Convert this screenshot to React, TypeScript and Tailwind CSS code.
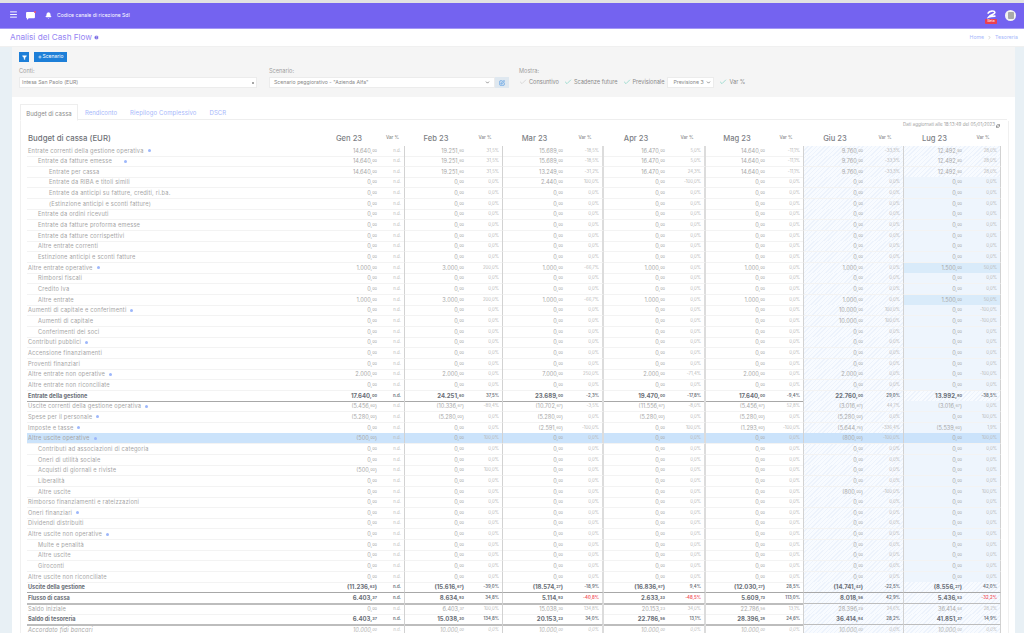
import React from "react";
import { Menu, Bell, Filter, Plus, ChevronDown, ChevronRight, Check, SquarePen, RefreshCw, HelpCircle } from "lucide-react";

const grid =
  "grid grid-cols-[291px_62px_25px_62px_36px_63px_38px_64px_38px_62px_36px_62px_38px_61px_36px]";

type Row = { l: string; i?: number; m?: number; k?: "t" | "tl" | "tt" | "it" };
const rows: Row[] = [
  { l: "Entrate correnti della gestione operativa", m: 5 },
  { l: "Entrate da fatture emesse", i: 1, m: 12 },
  { l: "Entrate per cassa", i: 2 },
  { l: "Entrate da RIBA e titoli simili", i: 2 },
  { l: "Entrate da anticipi su fatture, crediti, ri.ba.", i: 2 },
  { l: "(Estinzione anticipi e sconti fatture)", i: 2 },
  { l: "Entrate da ordini ricevuti", i: 1 },
  { l: "Entrate da fatture proforma emesse", i: 1 },
  { l: "Entrate da fatture corrispettivi", i: 1 },
  { l: "Altre entrate correnti", i: 1 },
  { l: "Estinzione anticipi e sconti fatture", i: 1 },
  { l: "Altre entrate operative", m: 5 },
  { l: "Rimborsi fiscali", i: 1 },
  { l: "Credito Iva", i: 1 },
  { l: "Altre entrate", i: 1 },
  { l: "Aumenti di capitale e conferimenti", m: 5 },
  { l: "Aumenti di capitale", i: 1 },
  { l: "Conferimenti dei soci", i: 1 },
  { l: "Contributi pubblici", m: 5 },
  { l: "Accensione finanziamenti" },
  { l: "Proventi finanziari" },
  { l: "Altre entrate non operative", m: 5 },
  { l: "Altre entrate non riconciliate" },
  { l: "Entrate della gestione", k: "tl" },
  { l: "Uscite correnti della gestione operativa", m: 5 },
  { l: "Spese per il personale", m: 5 },
  { l: "Imposte e tasse", m: 5 },
  { l: "Altre uscite operative", m: 5 },
  { l: "Contributi ad associazioni di categoria", i: 1 },
  { l: "Oneri di utilità sociale", i: 1 },
  { l: "Acquisti di giornali e riviste", i: 1 },
  { l: "Liberalità", i: 1 },
  { l: "Altre uscite", i: 1 },
  { l: "Rimborso finanziamenti e rateizzazioni" },
  { l: "Oneri finanziari", m: 5 },
  { l: "Dividendi distribuiti" },
  { l: "Altre uscite non operative", m: 5 },
  { l: "Multe e penalità", i: 1 },
  { l: "Altre uscite", i: 1 },
  { l: "Giroconti", i: 1 },
  { l: "Altre uscite non riconciliate" },
  { l: "Uscite della gestione", k: "tl" },
  { l: "Flusso di cassa", k: "tt" },
  { l: "Saldo iniziale" },
  { l: "Saldo di tesoreria", k: "tt" },
  { l: "Accordato fidi bancari", k: "it" },
];

type Col = { name: string; d: string; data: Record<number, [string, string]> };
const same = (ids: number[], v: [string, string]) => Object.fromEntries(ids.map((i) => [i, v]));

const cols: Col[] = [
  {
    name: "Gen",
    d: "n.d.",
    data: {
      ...same([0, 1, 2], ["14.640,00", "n.d."]),
      ...same([11, 14], ["1.000,00", "n.d."]),
      21: ["2.000,00", "n.d."],
      23: ["17.640,00", "n.d."],
      24: ["(5.456,60)", "n.d."],
      25: ["(5.280,00)", "n.d."],
      27: ["(500,00)", "n.d."],
      30: ["(500,00)", "n.d."],
      41: ["(11.236,63)", "n.d."],
      42: ["6.403,37", "n.d."],
      44: ["6.403,37", "n.d."],
      45: ["10.000,00", "n.d."],
    },
  },
  {
    name: "Feb",
    d: "0,0%",
    data: {
      ...same([0, 1, 2], ["19.251,60", "31,5%"]),
      ...same([11, 14], ["3.000,00", "200,0%"]),
      21: ["2.000,00", "0,0%"],
      23: ["24.251,60", "37,5%"],
      24: ["(10.336,67)", "-89,4%"],
      25: ["(5.280,00)", "0,0%"],
      27: ["0,00", "100,0%"],
      30: ["0,00", "100,0%"],
      41: ["(15.616,67)", "-39,0%"],
      42: ["8.634,93", "34,8%"],
      43: ["6.403,37", "100,0%"],
      44: ["15.038,30", "134,8%"],
      45: ["10.000,00", "0,0%"],
    },
  },
  {
    name: "Mar",
    d: "0,0%",
    data: {
      ...same([0, 1], ["15.689,00", "-18,5%"]),
      2: ["13.249,00", "-31,2%"],
      3: ["2.440,00", "100,0%"],
      ...same([11, 14], ["1.000,00", "-66,7%"]),
      21: ["7.000,00", "250,0%"],
      23: ["23.689,00", "-2,3%"],
      24: ["(10.702,67)", "-3,5%"],
      25: ["(5.280,00)", "0,0%"],
      26: ["(2.591,60)", "-100,0%"],
      41: ["(18.574,27)", "-18,9%"],
      42: ["5.114,93", "-40,8%"],
      43: ["15.038,30", "134,8%"],
      44: ["20.153,23", "34,0%"],
      45: ["10.000,00", "0,0%"],
    },
  },
  {
    name: "Apr",
    d: "0,0%",
    data: {
      ...same([0, 1], ["16.470,00", "5,0%"]),
      2: ["16.470,00", "24,3%"],
      3: ["0,00", "-100,0%"],
      ...same([11, 14], ["1.000,00", "0,0%"]),
      21: ["2.000,00", "-71,4%"],
      23: ["19.470,00", "-17,8%"],
      24: ["(11.556,67)", "-8,0%"],
      25: ["(5.280,00)", "0,0%"],
      26: ["0,00", "100,0%"],
      41: ["(16.836,67)", "9,4%"],
      42: ["2.633,33", "-48,5%"],
      43: ["20.153,23", "34,0%"],
      44: ["22.786,56", "13,1%"],
      45: ["10.000,00", "0,0%"],
    },
  },
  {
    name: "Mag",
    d: "0,0%",
    data: {
      ...same([0, 1, 2], ["14.640,00", "-11,1%"]),
      ...same([11, 14], ["1.000,00", "0,0%"]),
      21: ["2.000,00", "0,0%"],
      23: ["17.640,00", "-9,4%"],
      24: ["(5.456,67)", "52,8%"],
      25: ["(5.280,00)", "0,0%"],
      26: ["(1.293,60)", "-100,0%"],
      41: ["(12.030,27)", "28,5%"],
      42: ["5.609,73", "113,0%"],
      43: ["22.786,56", "13,1%"],
      44: ["28.396,28", "24,6%"],
      45: ["10.000,00", "0,0%"],
    },
  },
  {
    name: "Giu",
    d: "0,0%",
    data: {
      ...same([0, 1, 2], ["9.760,00", "-33,3%"]),
      ...same([11, 14], ["1.000,00", "0,0%"]),
      ...same([15, 16], ["10.000,00", "100,0%"]),
      21: ["2.000,00", "0,0%"],
      23: ["22.760,00", "29,0%"],
      24: ["(3.016,67)", "44,7%"],
      25: ["(5.280,00)", "0,0%"],
      26: ["(5.644,76)", "-336,4%"],
      27: ["(800,00)", "-100,0%"],
      32: ["(800,00)", "-100,0%"],
      41: ["(14.741,43)", "-22,5%"],
      42: ["8.018,56", "42,9%"],
      43: ["28.396,28", "24,6%"],
      44: ["36.414,84", "28,2%"],
      45: ["10.000,00", "0,0%"],
    },
  },
  {
    name: "Lug",
    d: "0,0%",
    data: {
      ...same([0, 1, 2], ["12.492,80", "28,0%"]),
      ...same([11, 14], ["1.500,00", "50,0%"]),
      ...same([15, 16, 21], ["0,00", "-100,0%"]),
      23: ["13.992,80", "-38,5%"],
      24: ["(3.016,67)", "0,0%"],
      25: ["0,00", "100,0%"],
      26: ["(5.539,60)", "1,9%"],
      27: ["0,00", "100,0%"],
      32: ["0,00", "100,0%"],
      41: ["(8.556,27)", "42,0%"],
      42: ["5.436,53", "-32,2%"],
      43: ["36.414,84", "28,2%"],
      44: ["41.851,37", "14,9%"],
      45: ["10.000,00", "0,0%"],
    },
  },
];

function Num({ v }: { v: string }) {
  const m = v.match(/^(\(?[\d.]+,)(\d\d)(\)?)$/);
  if (!m) return <>{v}</>;
  return (
    <>
      {m[1]}
      <span className="text-[3.8px]">{m[2]}</span>
      {m[3]}
    </>
  );
}

const hatch =
  "bg-fixed bg-[repeating-linear-gradient(135deg,#f8fbff_0px,#f8fbff_2px,#edf3fc_2px,#edf3fc_3px)]";

function bgFor(c: number, r: number) {
  if (r === 27) return "bg-[#cbe3fb]";
  if (c === 5) return hatch;
  if (c === 6) {
    if ([11, 14].includes(r)) return "bg-[#d9ebfa]";
    if ([0, 1, 2, 23, 41, 42, 43, 44, 45].includes(r)) return hatch;
    return "bg-[#eef5fd]";
  }
  return "";
}

function borderFor(r: number) {
  if (r === 23 || r === 41) return "border-b border-b-[#a8a8a8]";
  if (r === 42 || r === 44) return "border-b-2 border-b-[#bdbdbd]";
  return "border-b border-b-[#f3f3f3]";
}

function TableRow({ row, r }: { row: Row; r: number }) {
  const bold = row.k === "tl" || row.k === "tt";
  const it = row.k === "it";
  const b = borderFor(r);
  return (
    <div className={`${grid} h-[10.66px] leading-[10px]`}>
      <div
        className={`flex items-center overflow-hidden whitespace-nowrap ${b} ${r === 27 ? "bg-[#cbe3fb]" : ""} ${
          bold
            ? "text-[5.6px] font-bold text-[#6b7078]"
            : it
              ? "text-[5.7px] tracking-[0.2px] italic text-[#a8a8a8]"
              : "text-[5.7px] tracking-[0.2px] text-[#a6a6a6]"
        } ${row.i === 1 ? "pl-[11px]" : row.i === 2 ? "pl-[22px]" : "pl-[1px]"}`}
      >
        <span>{row.l}</span>
        {row.m ? <span className={`h-[3px] w-[3px] rounded-full bg-[#9db7fb] ${row.m === 12 ? "ml-[12px]" : "ml-[4px]"}`} /> : null}
      </div>
      {cols.map((c, ci) => {
        const [v, p] = c.data[r] ?? ["0,00", c.d];
        const red = p === "-40,8%" || p === "-48,5%" || p === "-32,2%";
        const txt = bold ? "text-[6px] font-bold text-[#6b7078]" : it ? "text-[5.6px] italic text-[#b3b3b3]" : "text-[5.6px] text-[#a8a8a8]";
        const ptxt = bold
          ? red
            ? "font-semibold text-[#f2575f]"
            : "font-semibold text-[#6b7078]"
          : it
            ? "italic text-[#bdbdbd]"
            : "text-[#b8b8b8]";
        const sep = ci === 2 || ci === 3 ? "border-r-2 border-r-[#dcdcdc]" : "border-r border-r-[#d2d2d2]";
        return (
          <React.Fragment key={c.name}>
            <div className={`flex items-center justify-end pr-[3px] whitespace-nowrap ${txt} ${b} ${bgFor(ci, r)}`}>
              <Num v={v} />
            </div>
            <div className={`flex items-center justify-end pr-[3px] text-[4.3px] whitespace-nowrap ${ptxt} ${b} ${sep} ${bgFor(ci, r)}`}>
              {p}
            </div>
          </React.Fragment>
        );
      })}
    </div>
  );
}

function Sel({ text, cls, chev }: { text: string; cls: string; chev?: boolean }) {
  return (
    <div className={`flex h-[11px] items-center justify-between bg-white border border-[#ececec] text-[5.2px] text-[#888] ${cls}`}>
      <span className="whitespace-nowrap">{text}</span>
      {chev ? (
        <ChevronDown className="h-[5px] w-[5px] text-[#555]" strokeWidth={3} />
      ) : (
        <span className="h-[2px] w-[2px] rounded-full bg-[#888]" />
      )}
    </div>
  );
}

function Chk({ text, gray }: { text: string; gray?: boolean }) {
  return (
    <div className="flex items-center gap-[2px] text-[5.6px] text-[#8a8a8a] whitespace-nowrap">
      <Check className={`h-[8px] w-[8px] ${gray ? "text-[#bdbdbd]" : "text-[#52c7ae]"}`} strokeWidth={1.5} />
      <span>{text}</span>
    </div>
  );
}

export default function App() {
  return (
    <div className="h-[633px] w-[1024px] overflow-hidden bg-white flex flex-col font-['Inter','Liberation_Sans',sans-serif]">
      <div className="h-[3px] bg-[#e2e2e2]" />
      <header className="flex h-[26px] items-center justify-between bg-[#7463f0] border-b border-b-[#a498f6] pl-[9px] pr-[8px] text-white">
        <div className="flex items-center">
          <Menu className="h-[9px] w-[9px] -mt-[2px]" strokeWidth={2.5} />
          <div className="relative ml-[8px]">
            <svg viewBox="0 0 10 9" className="h-[8px] w-[9px]">
              <path d="M1 0h8a1 1 0 0 1 1 1v5a1 1 0 0 1-1 1H3L1 9V7a1 1 0 0 1-1-1V1a1 1 0 0 1 1-1z" fill="#fff" />
            </svg>
            <span className="absolute -right-[1px] -top-[1px] h-[2px] w-[2px] rounded-full bg-[#f0506e]" />
          </div>
          <Bell className="ml-[10px] h-[7px] w-[7px]" fill="#fff" strokeWidth={1.5} />
          <span className="ml-[5px] text-[5.1px] whitespace-nowrap">Codice canale di ricezione SdI</span>
        </div>
        <div className="flex items-center gap-[8px]">
          <div className="relative h-[14px] mt-[3px] w-[12px] flex justify-center">
            <svg viewBox="0 0 12 10" className="h-[8.5px] w-[9px]">
              <path d="M1.5 3.5C3 .5 10-.5 10.5 2.5 11 5.5 5 5 2.5 8.5 5 7.5 8 7.5 10.5 7.5" fill="none" stroke="#fff" strokeWidth="2.2" strokeLinecap="round" />
            </svg>
            <span className="absolute bottom-0 left-0 flex h-[5.5px] w-[12px] items-center justify-center rounded-[1px] bg-[#ec3f4d] text-[3.4px] text-white">Beta</span>
          </div>
          <div className="flex h-[11px] w-[11px] items-center justify-center rounded-full bg-[#f2f2f2]">
            <span className="h-[7px] w-[6px] rounded-[1px] bg-[#a9a9a9]" />
          </div>
        </div>
      </header>

      <div className="flex h-[18px] items-center justify-between bg-white border-b border-b-[#f0f0f0] pl-[10px] pr-[6px]">
        <div className="flex items-center gap-[2px]">
          <span className="text-[8.2px] text-[#9686f3]">Analisi del Cash Flow</span>
          <HelpCircle className="h-[5px] w-[5px] text-[#6b5be0]" fill="#6b5be0" stroke="#fff" strokeWidth={2} />
        </div>
        <div className="flex items-center gap-[3px] text-[5.2px] text-[#a7b8fb]">
          <span>Home</span>
          <ChevronRight className="h-[5px] w-[5px] text-[#999]" />
          <span>Tesoreria</span>
        </div>
      </div>

      <div className="flex flex-1 min-h-0 pl-px bg-[#e8f0f5] pr-[9px]">
        <div className="w-[11px]" />
        <main className="flex-1 min-w-0 bg-white">
          <section className="h-[50px] bg-[#f5f5f5] pl-[7px] pt-[5px]">
            <div className="flex items-center gap-[5px]">
              <button className="flex h-[10px] w-[10px] items-center justify-center bg-[#1d7fd8]">
                <Filter className="h-[5px] w-[5px] text-white" fill="#fff" />
              </button>
              <button className="flex h-[10px] w-[33px] items-center justify-center gap-[1px] bg-[#1d7fd8] text-[5px] text-white">
                <Plus className="h-[4px] w-[4px]" strokeWidth={4} />
                Scenario
              </button>
            </div>
            <div className="mt-[5px] flex">
              <div className="w-[250px]">
                <div className="text-[5.6px] leading-[8px] text-[#a0a0a0]">Conti:</div>
                <Sel text="Intesa San Paolo (EUR)" cls="w-[238px] mt-[2px] px-[2px]" />
              </div>
              <div className="w-[250px]">
                <div className="text-[5.6px] leading-[8px] text-[#a0a0a0]">Scenario:</div>
                <div className="mt-[2px] flex">
                  <Sel text={'Scenario peggiorativo - "Azienda Alfa"'} cls="w-[226px] px-[4px]" chev />
                  <div className="flex h-[11px] w-[14px] items-center justify-center bg-[#dfe8f0]">
                    <SquarePen className="h-[6px] w-[6px] text-[#3f8fe0]" strokeWidth={2.5} />
                  </div>
                </div>
              </div>
              <div>
                <div className="text-[5.6px] leading-[8px] text-[#a0a0a0]">Mostra:</div>
                <div className="mt-[2px] flex h-[11px] items-center gap-[5px]">
                  <Chk text="Consuntivo" gray />
                  <Chk text="Scadenze future" />
                  <Chk text="Previsionale" />
                  <Sel text="Previsione 3" cls="w-[47px] -ml-[2px] pl-[5px] pr-[2px]" chev />
                  <Chk text="Var %" />
                </div>
              </div>
            </div>
          </section>

          <section className="px-[8px] pt-[7px]">
            <nav className="flex h-[16px] text-[6px] border-b border-b-[#eeeeee]">
              <div className="flex h-[17px] w-[58px] items-center justify-center bg-white border border-[#eeeeee] border-b-white pt-[1px] text-[#8a8a8a]">Budget di cassa</div>
              <div className="flex items-center pl-[7px] pt-[1px] text-[#a7b8fb]">Rendiconto</div>
              <div className="flex items-center pl-[13px] pt-[1px] tracking-[0.1px] text-[#a7b8fb]">Riepilogo Complessivo</div>
              <div className="flex items-center pl-[13px] pt-[1px] text-[#a7b8fb]">DSCR</div>
            </nav>
            <div className="h-[513px] w-[989px] border-x border-x-[#f0f0f0] pl-[6px]">
              <div className="mt-[1px] mb-[4px] flex h-[7px] w-[973px] items-center justify-end gap-[1px] pt-[2px] text-[4.5px] text-[#a0a0a0]">
                <span>Dati aggiornati alle 18:13:49 del 05/01/2023</span>
                <RefreshCw className="h-[4px] w-[4px] text-[#555]" strokeWidth={3} />
              </div>
              <div className={`${grid} h-[13.5px] items-center`}>
                <div className="pl-[1px] text-[7.8px] font-medium text-[#6f7278]">Budget di cassa (EUR)</div>
                {cols.map((c) => (
                  <React.Fragment key={c.name}>
                    <div className="text-center text-[7.6px] font-medium text-[#7d8085] whitespace-nowrap">
                      {c.name} 23
                    </div>
                    <div className="text-center text-[4.6px] font-medium text-[#8a8a8a]">Var %</div>
                  </React.Fragment>
                ))}
              </div>
              {rows.map((row, r) => (
                <TableRow key={r} row={row} r={r} />
              ))}
            </div>
          </section>
        </main>
      </div>
    </div>
  );
}
